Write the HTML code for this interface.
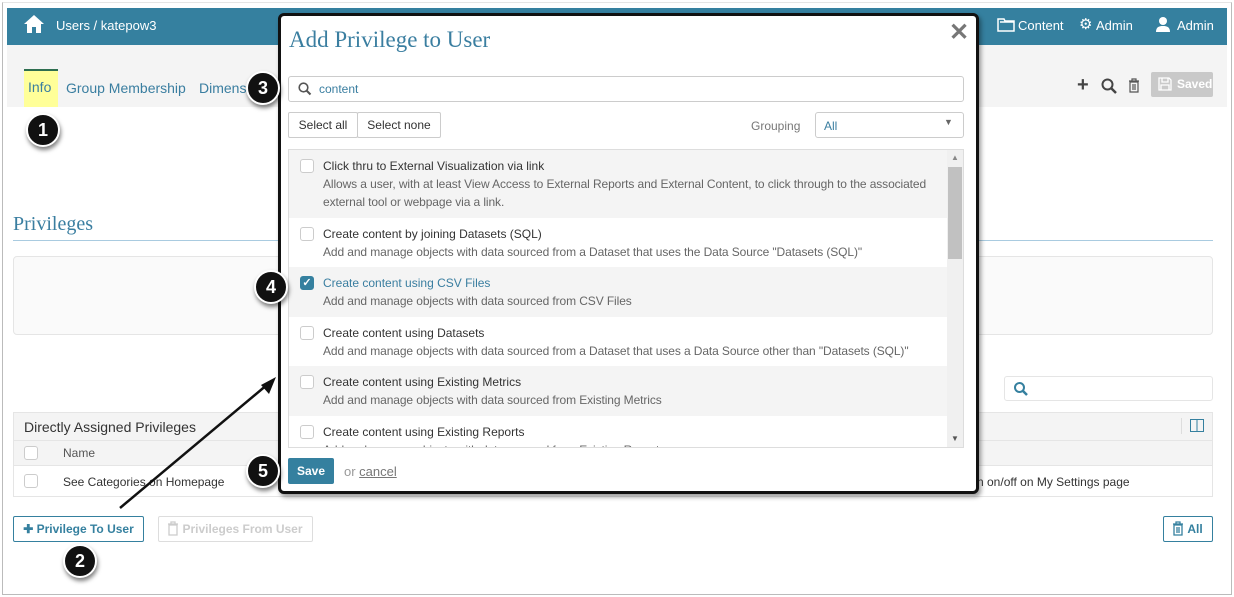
<!DOCTYPE html>
<html><head><style>
*{box-sizing:border-box;margin:0;padding:0}
body{width:1234px;height:597px;position:relative;background:#fff;font-family:"Liberation Sans",sans-serif;overflow:hidden;font-size:12px;color:#333}
.a{position:absolute}
.hdr{left:7px;top:8px;width:1220px;height:37px;background:#35809f;color:#fff;font-size:13px}
.circ{position:absolute;width:34px;height:34px;border-radius:50%;background:#111;color:#fff;font:bold 18px "Liberation Sans",sans-serif;text-align:center;line-height:30px;border:2px solid #fff;box-shadow:1px 3px 4px rgba(0,0,0,.5)}
.row{position:absolute;left:0;width:658px;}
.row .t{position:absolute;left:34px;top:9px;font-size:12px;color:#333}
.row .d{position:absolute;left:34px;font-size:12px;color:#666;line-height:18px;letter-spacing:-0.1px}
.cb{position:absolute;left:11px;top:9px;width:14px;height:14px;border:1px solid #ccc;border-radius:3px;background:#fff}
.btn{position:absolute;border:1px solid #ccc;border-radius:2px;background:#fff;font-size:12px;color:#333;text-align:center}
</style></head><body>
<div class="a" style="left:2px;top:2px;width:1230px;height:593px;border:1px solid #bbb;border-top:1px solid #e5e5e5"></div>
<div class="a hdr">
 <svg class="a" style="left:16px;top:6px" width="22" height="20" viewBox="0 0 22 20"><path d="M11 1L1 10h3v9h5v-6h4v6h5v-9h3z" fill="#fff"/></svg>
 <span class="a" style="left:49px;top:10px">Users / katepow3</span>
 <svg class="a" style="left:990px;top:9px" width="18" height="15"><path d="M1 2h6l1 2h9v10H1z M3 5h14" fill="none" stroke="#fff" stroke-width="1.5"/></svg>
 <span class="a" style="left:1011px;top:10px">Content</span>
 <span class="a" style="left:1072px;top:7px;font-size:15px">⚙</span>
 <span class="a" style="left:1089px;top:10px">Admin</span>
 <svg class="a" style="left:1148px;top:8px" width="16" height="16"><circle cx="8" cy="5" r="4" fill="#fff"/><path d="M1 16c0-5 3-6 7-6s7 1 7 6z" fill="#fff"/></svg>
 <span class="a" style="left:1170px;top:10px">Admin</span>
</div>
<div class="a" style="left:7px;top:45px;width:1220px;height:62px;background:#f4f4f4"></div>
<div class="a" style="left:24px;top:69px;width:34px;height:38px;background:#ffff99;border-top:2px solid #2e6e50"></div>
<span class="a" style="left:28px;top:79px;font-size:14px;color:#3a7ea0">Info</span>
<span class="a" style="left:66px;top:80px;font-size:14px;color:#3a7ea0">Group Membership</span>
<span class="a" style="left:199px;top:80px;font-size:14px;color:#3a7ea0">Dimens</span>
<span class="a" style="left:1077px;top:74px;font-size:20px;font-weight:bold;color:#444">+</span>
<svg class="a" style="left:1101px;top:78px" width="16" height="16"><circle cx="6.5" cy="6.5" r="5" fill="none" stroke="#444" stroke-width="2"/><path d="M10 10l5 5" stroke="#444" stroke-width="2.5"/></svg>
<svg class="a" style="left:1128px;top:78px" width="12" height="15"><path d="M1 3h10M4 3V1h4v2M2 4h8v10H2z M5 6v6M7 6v6" fill="none" stroke="#555" stroke-width="1.2"/></svg>
<div class="a" style="left:1151px;top:72px;width:62px;height:25px;background:#c9c9c9;border-radius:2px;color:#fff;font-weight:bold;font-size:12px;line-height:25px;padding-left:26px">Saved</div>
<svg class="a" style="left:1158px;top:77px" width="14" height="14"><path d="M1 1h10l2 2v10H1z M4 1v4h6V1 M3 8h8v5H3z" fill="none" stroke="#fff" stroke-width="1.3"/></svg>
<span class="a" style="left:13px;top:213px;font:20px 'Liberation Serif',serif;color:#3a7ea0">Privileges</span>
<div class="a" style="left:13px;top:240px;width:1200px;height:1px;background:#a9cbe0"></div>
<div class="a" style="left:13px;top:256px;width:1200px;height:79px;border:1px solid #e5e5e5;border-radius:4px;background:#fafafa"></div>
<div class="a" style="left:1004px;top:376px;width:209px;height:25px;border:1px solid #e5e5e5;border-radius:3px"></div>
<svg class="a" style="left:1013px;top:381px" width="16" height="16"><circle cx="6.5" cy="6.5" r="4.5" fill="none" stroke="#35809f" stroke-width="2"/><path d="M10 10l4 4" stroke="#35809f" stroke-width="2.5"/></svg>
<div class="a" style="left:13px;top:412px;width:1200px;height:85px;border:1px solid #e5e5e5"></div>
<div class="a" style="left:14px;top:413px;width:1198px;height:28px;background:#f4f4f4;border-bottom:1px solid #e5e5e5"></div>
<span class="a" style="left:24px;top:419px;font-size:14px">Directly Assigned Privileges</span>
<div class="a" style="left:1181px;top:418px;width:1px;height:16px;background:#ddd"></div>
<svg class="a" style="left:1190px;top:419px" width="14" height="13"><rect x="0.5" y="0.5" width="13" height="12" fill="none" stroke="#35809f"/><path d="M7 0v13" stroke="#35809f"/></svg>
<div class="a" style="left:14px;top:441px;width:1198px;height:25px;background:#f4f4f4;border-bottom:1px solid #e5e5e5"></div>
<div class="a" style="left:24px;top:446px;width:14px;height:14px;border:1px solid #ccc;border-radius:3px;background:#fff"></div>
<span class="a" style="left:63px;top:446px;font-size:12px;color:#555">Name</span>
<div class="a" style="left:24px;top:474px;width:14px;height:14px;border:1px solid #ccc;border-radius:3px"></div>
<span class="a" style="left:63px;top:475px;font-size:12px">See Categories on Homepage</span>
<span class="a" style="left:977px;top:475px;font-size:12px">n on/off on My Settings page</span>
<div class="btn" style="left:13px;top:516px;width:131px;height:26px;border-color:#35809f;color:#35809f;font-weight:bold;line-height:24px">✚ Privilege To User</div>
<div class="btn" style="left:158px;top:516px;width:155px;height:26px;color:#ccc;font-weight:bold;line-height:24px;border-color:#ddd;padding-left:14px">Privileges From User</div>
<svg class="a" style="left:167px;top:521px" width="12" height="15"><path d="M1 3h10M4 3V1h4v2M2 4h8v10H2z" fill="none" stroke="#ccc" stroke-width="1.3"/></svg>
<div class="btn" style="left:1163px;top:516px;width:50px;height:26px;border-color:#35809f;color:#35809f;font-weight:bold;line-height:24px;padding-left:14px">All</div>
<svg class="a" style="left:1172px;top:521px" width="12" height="15"><path d="M1 3h10M4 3V1h4v2M2 4h8v10H2z M5 6v6M7 6v6" fill="none" stroke="#35809f" stroke-width="1.3"/></svg>
<!-- modal -->
<div class="a" style="left:278px;top:13px;width:701px;height:481px;background:#fff;border:3px solid #111;border-radius:6px;box-shadow:2px 3px 5px rgba(0,0,0,.4)">
 <span class="a" style="left:8px;top:11px;font:23px 'Liberation Serif',serif;color:#3a7ea0">Add Privilege to User</span>
 <span class="a" style="left:668px;top:2px;font-size:24px;color:#777;font-weight:bold">✕</span>
 <div class="a" style="left:7px;top:60px;width:676px;height:26px;border:1px solid #ccc;border-radius:3px"></div>
 <svg class="a" style="left:17px;top:66px" width="14" height="14"><circle cx="5.5" cy="5.5" r="4.3" fill="none" stroke="#555" stroke-width="1.6"/><path d="M8.5 8.5l4 4" stroke="#555" stroke-width="2"/></svg>
 <span class="a" style="left:38px;top:66px;font-size:12px;color:#3a7ea0">content</span>
 <div class="btn" style="left:7px;top:96px;width:70px;height:26px;line-height:24px">Select all</div>
 <div class="btn" style="left:76px;top:96px;width:84px;height:26px;line-height:24px">Select none</div>
 <span class="a" style="left:470px;top:103px;font-size:12px;color:#777">Grouping</span>
 <div class="a" style="left:534px;top:96px;width:149px;height:26px;border:1px solid #ccc;border-radius:3px;color:#3a7ea0;padding:6px 0 0 8px">All</div>
 <span class="a" style="left:663px;top:101px;font-size:9px;color:#666">▼</span>
 <div class="a" style="left:7px;top:133px;width:676px;height:299px;border:1px solid #ddd;overflow:hidden">
  <div class="row" style="top:0;height:68px;background:#f4f4f4"><div class="cb"></div><span class="t">Click thru to External Visualization via link</span><span class="d" style="top:25px">Allows a user, with at least View Access to External Reports and External Content, to click through to the associated<br>external tool or webpage via a link.</span></div>
  <div class="row" style="top:68px;height:49px;background:#fff"><div class="cb"></div><span class="t">Create content by joining Datasets (SQL)</span><span class="d" style="top:25px">Add and manage objects with data sourced from a Dataset that uses the Data Source "Datasets (SQL)"</span></div>
  <div class="row" style="top:117px;height:50px;background:#f4f4f4"><div class="cb" style="background:#35809f;border-color:#35809f;color:#fff;font-size:11px;line-height:12px;text-align:center;font-weight:bold">✓</div><span class="t" style="color:#3a7ea0">Create content using CSV Files</span><span class="d" style="top:25px">Add and manage objects with data sourced from CSV Files</span></div>
  <div class="row" style="top:167px;height:49px;background:#fff"><div class="cb"></div><span class="t">Create content using Datasets</span><span class="d" style="top:25px">Add and manage objects with data sourced from a Dataset that uses a Data Source other than "Datasets (SQL)"</span></div>
  <div class="row" style="top:216px;height:50px;background:#f4f4f4"><div class="cb"></div><span class="t">Create content using Existing Metrics</span><span class="d" style="top:25px">Add and manage objects with data sourced from Existing Metrics</span></div>
  <div class="row" style="top:266px;height:50px;background:#fff"><div class="cb"></div><span class="t">Create content using Existing Reports</span><span class="d" style="top:25px">Add and manage objects with data sourced from Existing Reports</span></div>
  <div class="a" style="left:658px;top:0;width:17px;height:299px;background:#f0f0f0"></div>
  <div class="a" style="left:659px;top:17px;width:14px;height:92px;background:#c1c1c1"></div>
  <span class="a" style="left:662px;top:3px;font-size:8px;color:#888">▲</span>
  <span class="a" style="left:662px;top:284px;font-size:8px;color:#555">▼</span>
 </div>
 <div class="a" style="left:7px;top:442px;width:46px;height:26px;background:#35809f;border-radius:2px;color:#fff;font-weight:bold;font-size:12px;text-align:center;line-height:26px">Save</div>
 <span class="a" style="left:63px;top:448px;font-size:13px;color:#999">or <u style="color:#777">cancel</u></span>
</div>
<svg class="a" style="left:0;top:0" width="1234" height="597"><path d="M120 508L268 384" stroke="#111" stroke-width="2.5"/><path d="M276 377l-7 17-8-9z" fill="#111"/></svg>
<div class="circ" style="left:26px;top:113px">1</div>
<div class="circ" style="left:63px;top:544px">2</div>
<div class="circ" style="left:246px;top:71px">3</div>
<div class="circ" style="left:254px;top:270px">4</div>
<div class="circ" style="left:246px;top:454px">5</div>
</body></html>
